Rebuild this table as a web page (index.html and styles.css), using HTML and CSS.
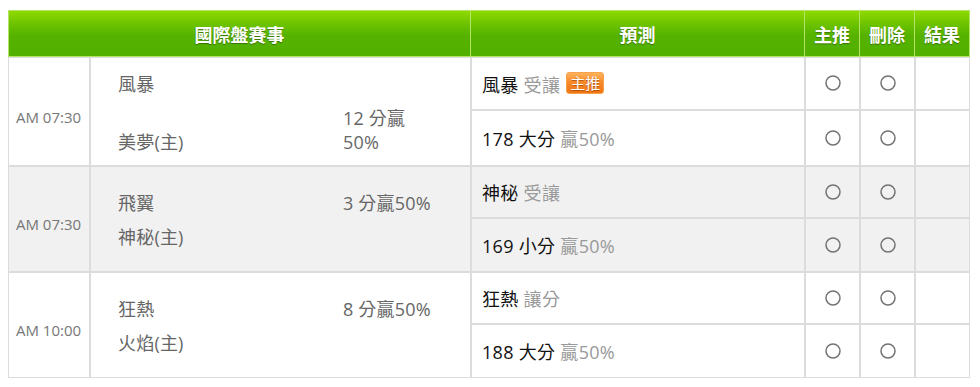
FILE: index.html
```html
<!DOCTYPE html>
<html lang="zh-Hant">
<head>
<meta charset="utf-8">
<title>國際盤賽事</title>
<link rel="stylesheet" href="styles.css">
</head>
<body>
<table class="board">
  <colgroup>
    <col class="c-time"><col class="c-match"><col class="c-pred"><col class="c-op"><col class="c-op"><col class="c-op">
  </colgroup>
  <thead>
    <tr>
      <th colspan="2">國際盤賽事</th>
      <th>預測</th>
      <th>主推</th>
      <th>刪除</th>
      <th>結果</th>
    </tr>
  </thead>
  <tbody>
    <tr class="sub-a r1a">
      <td class="time" rowspan="2">AM 07:30</td>
      <td class="match" rowspan="2">
        <div class="mgrid">
          <span class="team">風暴</span><span class="hcp"></span>
          <span class="team">美夢(主)</span><span class="hcp">12 分贏50%</span>
        </div>
      </td>
      <td class="pred"><span class="pk">風暴</span> <span class="muted">受讓</span> <span class="badge">主推</span></td>
      <td class="op"><svg class="radio" viewBox="0 0 16 16"><circle cx="8" cy="8" r="7"/></svg></td>
      <td class="op"><svg class="radio" viewBox="0 0 16 16"><circle cx="8" cy="8" r="7"/></svg></td>
      <td class="op"></td>
    </tr>
    <tr class="sub-b r1b">
      <td class="pred"><span class="pk">178 大分</span> <span class="muted">贏50%</span></td>
      <td class="op"><svg class="radio" viewBox="0 0 16 16"><circle cx="8" cy="8" r="7"/></svg></td>
      <td class="op"><svg class="radio" viewBox="0 0 16 16"><circle cx="8" cy="8" r="7"/></svg></td>
      <td class="op"></td>
    </tr>
    <tr class="sub-a alt">
      <td class="time" rowspan="2">AM 07:30</td>
      <td class="match" rowspan="2">
        <div class="mgrid">
          <span class="team">飛翼</span><span class="hcp">3 分贏50%</span>
          <span class="team">神秘(主)</span><span class="hcp"></span>
        </div>
      </td>
      <td class="pred"><span class="pk">神秘</span> <span class="muted">受讓</span></td>
      <td class="op"><svg class="radio" viewBox="0 0 16 16"><circle cx="8" cy="8" r="7"/></svg></td>
      <td class="op"><svg class="radio" viewBox="0 0 16 16"><circle cx="8" cy="8" r="7"/></svg></td>
      <td class="op"></td>
    </tr>
    <tr class="sub-b alt">
      <td class="pred"><span class="pk">169 小分</span> <span class="muted">贏50%</span></td>
      <td class="op"><svg class="radio" viewBox="0 0 16 16"><circle cx="8" cy="8" r="7"/></svg></td>
      <td class="op"><svg class="radio" viewBox="0 0 16 16"><circle cx="8" cy="8" r="7"/></svg></td>
      <td class="op"></td>
    </tr>
    <tr class="sub-a">
      <td class="time" rowspan="2">AM 10:00</td>
      <td class="match" rowspan="2">
        <div class="mgrid">
          <span class="team">狂熱</span><span class="hcp">8 分贏50%</span>
          <span class="team">火焰(主)</span><span class="hcp"></span>
        </div>
      </td>
      <td class="pred"><span class="pk">狂熱</span> <span class="muted">讓分</span></td>
      <td class="op"><svg class="radio" viewBox="0 0 16 16"><circle cx="8" cy="8" r="7"/></svg></td>
      <td class="op"><svg class="radio" viewBox="0 0 16 16"><circle cx="8" cy="8" r="7"/></svg></td>
      <td class="op"></td>
    </tr>
    <tr class="sub-b">
      <td class="pred"><span class="pk">188 大分</span> <span class="muted">贏50%</span></td>
      <td class="op"><svg class="radio" viewBox="0 0 16 16"><circle cx="8" cy="8" r="7"/></svg></td>
      <td class="op"><svg class="radio" viewBox="0 0 16 16"><circle cx="8" cy="8" r="7"/></svg></td>
      <td class="op"></td>
    </tr>
  </tbody>
</table>
</body>
</html>
```

FILE: styles.css
```css
html, body {
  margin: 0;
  padding: 0;
  background: #fff;
}
body {
  padding: 10px 8px 0 8px;
  font-family: "Open Sans", "Noto Sans CJK TC", sans-serif;
}
.board {
  border-collapse: separate;
  border-spacing: 0;
  table-layout: fixed;
  width: 962px;
}
.c-time { width: 82px; }
.c-match { width: 381px; }
.c-pred { width: 334px; }
.c-op { width: 55px; }

.board th {
  height: 45px;
  padding: 0;
  color: #fff;
  font-weight: bold;
  font-size: 18px;
  text-align: center;
  vertical-align: middle;
  text-shadow: 0 1px 1px rgba(0, 0, 0, 0.35);
  background: linear-gradient(#8fd900 0%, #6cc200 30%, #55b200 55%, #52b000 100%);
  border-top: 1px solid #b4e463;
  border-bottom: 1px solid #b4e463;
  border-right: 1px solid #b4e463;
}
.board th:first-child {
  border-left: 1px solid #b4e463;
}

.board td {
  border: 1px solid #dcdcdc;
  padding: 0;
  vertical-align: middle;
  background: #fff;
}
.board tr.alt td {
  background: #f1f1f1;
}
.sub-a { height: 52px; }
.sub-b { height: 54px; }
.r1a { height: 53px; }
.r1b { height: 56px; }

.time {
  padding: 10px 0 0 7px !important;
  font-size: 15px;
  color: #777;
  white-space: nowrap;
}
.match {
  padding: 2px 0 0 27px !important;
  color: #666;
  font-size: 18px;
}
.mgrid {
  display: grid;
  grid-template-columns: 225px 96px;
  align-items: end;
}
.mgrid > span {
  padding: 5px 0;
  line-height: 24px;
  letter-spacing: 0.2px;
}
.pred {
  padding-left: 10px !important;
  font-size: 18px;
  font-weight: 400;
  color: #111;
  white-space: nowrap;
  letter-spacing: 0.3px;
}
.muted {
  color: #999;
}
.badge {
  display: inline-block;
  vertical-align: 3px;
  height: 20px;
  line-height: 20px;
  padding: 0 3px;
  margin-left: 1px;
  font-size: 15px;
  letter-spacing: 0;
  color: #fff;
  border: 1px solid #f7a24a;
  border-radius: 3px;
  background: linear-gradient(#ffb25c 0%, #f88a2c 45%, #f07614 100%);
  text-shadow: 0 1px 1px rgba(120, 50, 0, 0.6);
}
.op {
  text-align: center;
}
.radio {
  display: block;
  width: 16px;
  height: 16px;
  margin: -1px auto 0;
  fill: none;
  stroke: #737373;
  stroke-width: 1.5;
}
```
